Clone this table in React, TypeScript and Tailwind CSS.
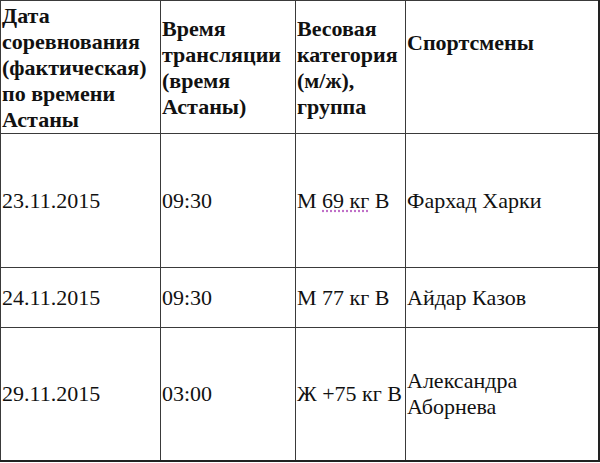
const headCell = "border border-[#3a3a3a] align-top px-[1px] font-bold whitespace-nowrap";
const bodyCell = "border border-[#3a3a3a] align-middle px-[1px]";

export default function App() {
  return (
    <div className="w-[600px] h-[463px] bg-white text-[#111] font-['Liberation_Serif','Times_New_Roman',serif] text-[22px] leading-[26px]">
      <table className="table-fixed border-collapse w-[598px] border-r-2 border-b-2 border-[#222]">
        <colgroup>
          <col className="w-[160px]" />
          <col className="w-[135px]" />
          <col className="w-[110px]" />
          <col className="w-[193px]" />
        </colgroup>
        <tbody>
          <tr className="h-[133px]">
            <td className={`${headCell} pt-[2px]`}>
              Дата
              <br />
              соревнования
              <br />
              (фактическая)
              <br />
              по времени
              <br />
              Астаны
            </td>
            <td className={`${headCell} pt-[15px]`}>
              Время
              <br />
              трансляции
              <br />
              (время
              <br />
              Астаны)
            </td>
            <td className={`${headCell} pt-[15px]`}>
              Весовая
              <br />
              категория
              <br />
              (м/ж),
              <br />
              группа
            </td>
            <td className={`${headCell} pt-[29px]`}>Спортсмены</td>
          </tr>
          <tr className="h-[134px]">
            <td className={bodyCell}>23.11.2015</td>
            <td className={bodyCell}>09:30</td>
            <td className={`${bodyCell} whitespace-nowrap`}>
              М{" "}
              <span className="underline decoration-dotted decoration-[#c070c8] underline-offset-[3px]">
                69 кг
              </span>{" "}
              В
            </td>
            <td className={bodyCell}>Фархад Харки</td>
          </tr>
          <tr className="h-[60px]">
            <td className={bodyCell}>24.11.2015</td>
            <td className={bodyCell}>09:30</td>
            <td className={`${bodyCell} whitespace-nowrap`}>М 77 кг В</td>
            <td className={bodyCell}>Айдар Казов</td>
          </tr>
          <tr className="h-[133px]">
            <td className={bodyCell}>29.11.2015</td>
            <td className={bodyCell}>03:00</td>
            <td className={`${bodyCell} whitespace-nowrap`}>Ж +75 кг В</td>
            <td className={bodyCell}>
              Александра
              <br />
              Аборнева
            </td>
          </tr>
        </tbody>
      </table>
    </div>
  );
}
